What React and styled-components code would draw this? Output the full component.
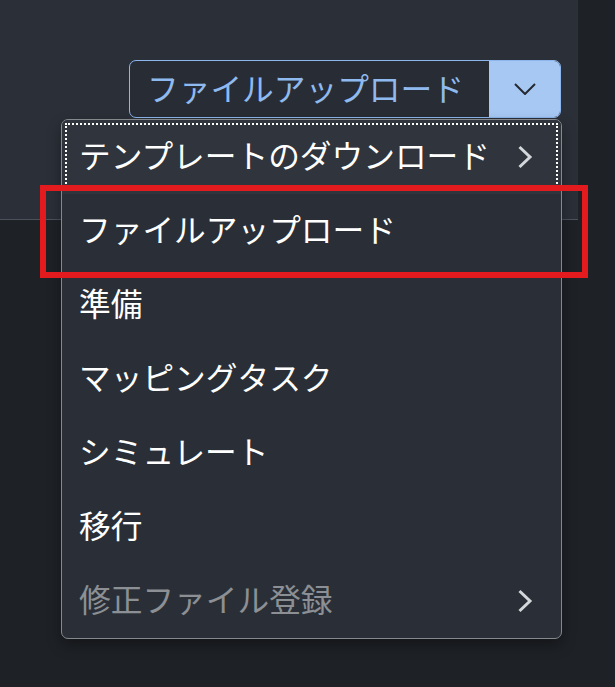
import React from 'react';
import styled, {createGlobalStyle} from 'styled-components';

const GlobalStyle = createGlobalStyle`
  html, body {
    margin: 0;
    padding: 0;
    background: #1e2126;
  }
  body {
    font-family: "Noto Sans CJK JP", "Noto Sans", sans-serif;
    width: 615px;
    height: 687px;
    overflow: hidden;
  }
`;

const Page = styled.div`
  position: relative;
  width: 615px;
  height: 687px;
  background: #1e2126;
`;

const TopPanel = styled.div`
  width: 578px;
  height: 220px;
  box-sizing: border-box;
  background: #2b3038;
  border-bottom: 1px solid #4c525c;
  display: flex;
  justify-content: flex-end;
  align-items: flex-start;
  padding: 60px 17px 0 0;
`;

const SplitButton = styled.div`
  display: flex;
  width: 432px;
  height: 58px;
  box-sizing: border-box;
  border: 1px solid #8db6ec;
  border-radius: 7px;
  overflow: hidden;
  background: #282c34;
`;

const ButtonLabel = styled.div`
  flex: 1;
  display: flex;
  align-items: center;
  padding: 0 0 4px 17px;
  font-size: 31.7px;
  color: #8fbaf0;
  white-space: nowrap;
`;

const ButtonToggle = styled.div`
  width: 71px;
  display: flex;
  align-items: center;
  justify-content: center;
  background: #a6c8f3;
`;

const Menu = styled.ul`
  position: absolute;
  left: 61px;
  top: 119px;
  width: 501px;
  margin: 0;
  padding: 0;
  list-style: none;
  box-sizing: border-box;
  background: #2a2f37;
  border: 1px solid #85888d;
  border-radius: 7px;
  box-shadow: 0 6px 14px rgba(0, 0, 0, 0.35);
  overflow: hidden;
`;

const Item = styled.li`
  height: 74px;
  box-sizing: border-box;
  display: flex;
  align-items: center;
  justify-content: space-between;
  padding: 0 28px 6px 17px;
  font-size: 31.7px;
  white-space: nowrap;
  color: ${p => (p.disabled ? '#8c8f94' : '#ffffff')};
  background: ${p => (p.focused ? '#2f343d' : 'transparent')};
  outline: ${p => (p.focused ? '2px dotted #ffffff' : 'none')};
  outline-offset: -5px;

  svg {
    margin-top: 6px;
  }
`;

const Highlight = styled.div`
  position: absolute;
  left: 40px;
  top: 185px;
  width: 548px;
  height: 93px;
  box-sizing: border-box;
  border: 6px solid #e31b1f;
  pointer-events: none;
`;

const ChevronDown = () => (
  <svg width="22" height="12" viewBox="0 0 22 12">
    <path d="M1 1 L11 11 L21 1" fill="none" stroke="#252a31" strokeWidth="2" />
  </svg>
);

const ChevronRight = () => (
  <svg width="16" height="24" viewBox="0 0 16 24">
    <path d="M2.5 2 L13 12 L2.5 22" fill="none" stroke="#d3d6da" strokeWidth="3" />
  </svg>
);

const items = [
  {label: 'テンプレートのダウンロード', sub: true, focused: true},
  {label: 'ファイルアップロード'},
  {label: '準備'},
  {label: 'マッピングタスク'},
  {label: 'シミュレート'},
  {label: '移行'},
  {label: '修正ファイル登録', sub: true, disabled: true},
];

export default function App() {
  return (
    <Page>
      <GlobalStyle/>
      <TopPanel>
        <SplitButton>
          <ButtonLabel>ファイルアップロード</ButtonLabel>
          <ButtonToggle><ChevronDown/></ButtonToggle>
        </SplitButton>
      </TopPanel>
      <Menu>
        {items.map(item => (
          <Item key={item.label} focused={item.focused} disabled={item.disabled}>
            <span>{item.label}</span>
            {item.sub && <ChevronRight/>}
          </Item>
        ))}
      </Menu>
      <Highlight/>
    </Page>
  );
}
